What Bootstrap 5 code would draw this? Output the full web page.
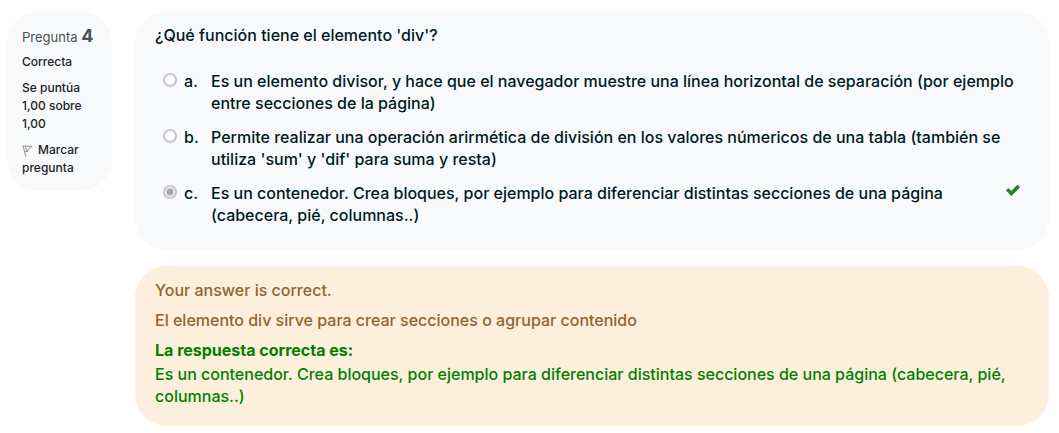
<!DOCTYPE html>
<html lang="es">
<head>
<meta charset="utf-8">
<meta name="viewport" content="width=device-width, initial-scale=1">
<title>Pregunta 4</title>
<link href="https://cdn.jsdelivr.net/npm/bootstrap@5.3.0/dist/css/bootstrap.min.css" rel="stylesheet">
<style>
body { font-family: Inter, "Open Sans", sans-serif; font-size: 16px; line-height: 22px; font-weight: 500; color: #001a1e; background: #fff; }
.question { padding: 11px 10px 7px 7px; gap: 23px; }
.panel { background: #f8f9fb; border-radius: 32px; }
.info { width: 105px; padding: 14px 15px; font-size: 12px; line-height: 18px; color: #1d2125; }
.info-title { font-size: 13px; line-height: 22px; font-weight: 400; color: #495057; margin-bottom: 5px; white-space: nowrap; }
.info-number { font-size: 18px; font-weight: 700; }
.formulation { padding: 13px 20px 24px; }
.answers { margin-top: 24px; padding-left: 8px; gap: 12px; }
.answer-row input { appearance: none; flex: none; width: 14px; height: 14px; margin: 3px 7px 0 0; border: 2px solid #c6c7ce; border-radius: 50%; background: #fff; }
.answer-row input:checked { background: radial-gradient(circle, #a4a5ad 0 3px, #f4f4f6 4px); }
.answer-letter { flex: none; width: 27px; }
.answer-text { max-width: 806px; }
.answer-row svg { flex: none; margin: 1px 8px 0 auto; }
.feedback { background: #fcefdc; color: #8f662e; border-radius: 32px; padding: 13px 20px 19px; margin-top: 16px; }
.feedback p { margin-bottom: 8px; }
.right-answer { color: #008000; }
.right-answer strong { display: block; margin-bottom: 2px; }
</style>
</head>
<body>
<main class="question d-flex align-items-start">
  <aside class="info panel flex-shrink-0">
    <h1 class="info-title">Pregunta <span class="info-number">4</span></h1>
    <p class="mb-2">Correcta</p>
    <p class="mb-2">Se puntúa 1,00 sobre 1,00</p>
    <a href="#" class="text-reset text-decoration-none"><svg class="me-1" width="12" height="12" viewBox="0 0 12 12" fill="none" stroke="#777" aria-hidden="true"><path d="M1 1 3.8 11.5M1 1 10 1.3 6.2 4.2 5.4 6.6 2.8 6.6M3.4 1.8 4.7 6.2" stroke-width=".8"/></svg>Marcar pregunta</a>
  </aside>
  <div class="flex-grow-1">
    <form class="formulation panel">
      <p class="mb-0" id="qtext">¿Qué función tiene el elemento 'div'?</p>
      <div class="answers d-flex flex-column" role="radiogroup" aria-labelledby="qtext">
        <div class="answer-row d-flex">
          <input type="radio" name="answer" id="answer-a" disabled>
          <label class="d-flex" for="answer-a"><span class="answer-letter">a.</span><span class="answer-text">Es un elemento divisor, y hace que el navegador muestre una línea horizontal de separación (por ejemplo entre secciones de la página)</span></label>
        </div>
        <div class="answer-row d-flex">
          <input type="radio" name="answer" id="answer-b" disabled>
          <label class="d-flex" for="answer-b"><span class="answer-letter">b.</span><span class="answer-text">Permite realizar una operación arirmética de división en los valores númericos de una tabla (también se utiliza 'sum' y 'dif' para suma y resta)</span></label>
        </div>
        <div class="answer-row d-flex">
          <input type="radio" name="answer" id="answer-c" checked disabled>
          <label class="d-flex" for="answer-c"><span class="answer-letter">c.</span><span class="answer-text">Es un contenedor. Crea bloques, por ejemplo para diferenciar distintas secciones de una página (cabecera, pié, columnas..)</span></label>
          <svg width="16" height="16" viewBox="0 0 16 16" role="img" aria-label="Correcta"><path d="M1.3 7.3 3.3 5.4 6.3 8.3 12.5 2.1 14.7 4.2 6.3 12.7Z" fill="#2b7a35" stroke="#2b7a35" stroke-width=".7" stroke-linejoin="round"/></svg>
        </div>
      </div>
    </form>
    <section class="feedback">
      <p>Your answer is correct.</p>
      <p>El elemento div sirve para crear secciones o agrupar contenido</p>
      <div class="right-answer"><strong>La respuesta correcta es:</strong>Es un contenedor. Crea bloques, por ejemplo para diferenciar distintas secciones de una página (cabecera, pié, columnas..)</div>
    </section>
  </div>
</main>
<script src="https://cdn.jsdelivr.net/npm/bootstrap@5.3.0/dist/js/bootstrap.bundle.min.js"></script>
</body>
</html>
